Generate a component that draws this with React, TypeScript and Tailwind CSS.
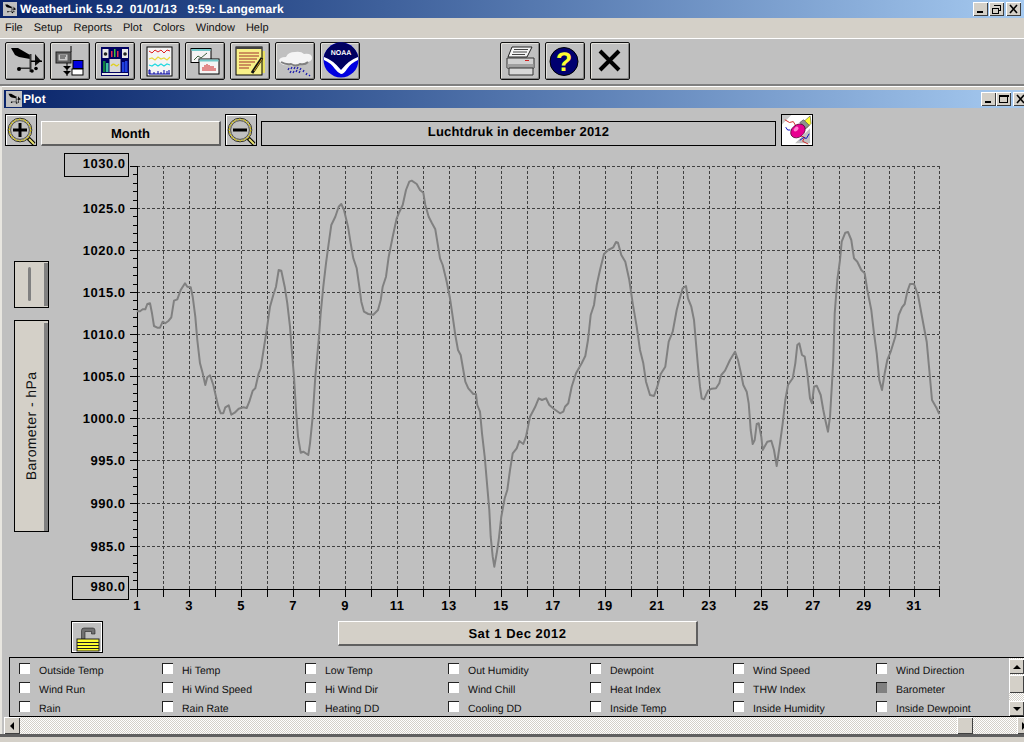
import React from "react";

const trace = (ox: number, oy: number, a: number[]) => {
  const out: string[] = [];
  for (let i = 0; i < a.length; i += 2) out.push(`${(ox + a[i] / 3).toFixed(1)},${(oy + a[i + 1] / 3).toFixed(1)}`);
  return out.join(" ");
};
const curve = [
  trace(130, 170, [20,424,30,424,38,418,46,418,52,402,60,400,66,430,72,468,82,473,90,473,98,455,106,460,116,452,124,442,132,392,142,388,152,360,165,340,172,350,182,352,188,380,196,440,202,510,210,580,218,610,226,645,232,622,240,616,250,645,258,680,265,710,272,730,280,730,286,712,296,706,304,734,314,728,326,716,340,712,350,714,358,695,368,662,376,655,386,610,392,595,400,545,410,480,420,410,430,375,438,350,446,300,454,302,464,350,472,400,480,470,486,550,492,620,498,720,504,800,512,848,520,845,535,855,540,820,548,740,556,620,566,510,572,430,580,350,588,280,596,220,604,165,616,140,626,110,634,102,642,120,654,170,662,220,670,265,680,295,688,350,694,395,702,425,715,432,730,434,744,420,752,390,758,350,768,320,776,260,788,200,800,145,806,130]),
  trace(400, 170, [8,105,18,60,28,35,35,32,50,42,60,60,70,68,76,105,86,140,96,160,106,178,112,215,120,265,128,285,140,335,150,385,158,440,166,495,174,540,182,555,190,600,196,635,205,655,220,672,228,672,232,705,240,725,246,790,254,860,260,930,268,1020,272,1100,278,1160,283,1190,290,1150,296,1110,304,1040,314,985,322,960,330,900,338,850,350,835,358,813,370,822,378,800,390,740,405,712,416,685,426,690,438,685,448,705,462,717,480,730,490,725,495,710,505,700,515,650,528,610,545,580,556,558,564,510,572,435,582,405,590,345,600,300,612,252,625,240,640,232,648,216,654,218,664,255,676,275,688,330,698,400,710,470,720,540,730,580,738,635,750,675,762,678,772,650,782,612,796,590,806,515,818,485,830,420]),
  trace(670, 220, [20,270,28,240,38,205,48,198,54,235,64,260,72,300,78,370,84,440,90,500,95,535,102,538,114,512,125,506,138,505,148,490,154,465,165,452,180,420,195,395,204,420,214,465,220,495,230,515,236,550,242,630,248,672,254,660,260,612,266,610,274,650,278,690,292,665,304,662,312,690,320,738,330,670,338,610,346,540,354,495,368,475,376,430,382,375,388,370,396,405,404,410,412,460,420,535,426,550,432,500,440,497,452,525,460,570,466,600,474,635,480,590,486,490,490,420,494,280,502,180,510,120,515,65,526,38,534,36,544,60,552,115,562,125,574,150,584,160,592,210,604,270,612,340,620,400,628,480,636,510,644,460,652,420,662,395,676,350,686,285,696,262,704,252,712,215,720,192,732,192,744,225,756,290,770,365,778,450,786,540,800,565,808,582]),
].join(" ");

const xs = Array.from({ length: 32 }, (_, i) => (i <= 27 ? 137 + 26 * i : 839 + 25 * (i - 27)));
const ys = [166, 208, 250, 292, 334, 376, 418, 460, 503, 546, 589];
const yVals = ["1030.0", "1025.0", "1020.0", "1015.0", "1010.0", "1005.0", "1000.0", "995.0", "990.0", "985.0", "980.0"];

function Vane() {
  return (
    <g fill="#000">
      <polygon points="6,6 13,6 25,13 25,17 14,15 10,13" />
      <rect x="24.5" y="12" width="2" height="18" fill="#333" />
      <polygon points="30,12 36,19 30,24" fill="#111" />
      <rect x="26" y="18.5" width="11" height="1.5" />
      <rect x="14" y="25.5" width="12" height="1.5" fill="#333" />
      <circle cx="14" cy="27" r="2" />
      <circle cx="27" cy="29" r="1.8" />
      <circle cx="31" cy="26.5" r="1.8" />
    </g>
  );
}

function TBtn({ children }: { children: React.ReactNode }) {
  return (
    <div className="relative w-[40px] h-[38px] shrink-0 rounded-[2px] border border-[#111] bg-[#c0c0c0] shadow-[inset_1px_1px_0_#e4e2dc,inset_-1px_-1px_0_#808080]">
      <svg viewBox="0 0 40 38" width="40" height="38" className="absolute -left-px -top-px">
        {children}
      </svg>
    </div>
  );
}

function Magnifier({ minus }: { minus?: boolean }) {
  return (
    <div className="absolute top-[114px] w-[32px] h-[32px] border border-black bg-[#c0c0c0] shadow-[inset_1px_1px_0_#fff]" style={{ left: minus ? 225 : 5 }}>
      <svg viewBox="0 0 32 32" width="32" height="32" className="absolute -left-px -top-px">
        <line x1="23" y1="24" x2="29" y2="30" stroke="#000" strokeWidth="4" />
        <line x1="24" y1="25" x2="29" y2="30" stroke="#e8e070" strokeWidth="2" />
        <circle cx="15" cy="16" r="11.8" fill="#c0c0c0" stroke="#222" strokeWidth="1" />
        <circle cx="15" cy="16" r="10.6" fill="none" stroke="#c8b820" strokeWidth="1.6" strokeDasharray="2 1" />
        <circle cx="15" cy="16" r="9.4" fill="none" stroke="#333" strokeWidth="0.8" />
        <rect x="8" y="14.5" width="14" height="3" fill="#000" />
        {!minus && <rect x="13.5" y="9" width="3" height="14" fill="#000" />}
      </svg>
    </div>
  );
}

function WinBtn({ left, top, kind }: { left: number; top: number; kind: "min" | "max" | "restore" | "close" }) {
  return (
    <div className="absolute w-[15px] h-[14px] bg-[#d4d0c8] shadow-[inset_1px_1px_0_#fff,inset_-1px_-1px_0_#404040]" style={{ left, top }}>
      <svg viewBox="0 0 15 14" width="15" height="14" shapeRendering="crispEdges">
        {kind === "min" && <rect x="4" y="9" width="6" height="2" fill="#000" />}
        {kind === "max" && <path d="M3.5 3.5h8v7h-8z M3 3h9v1H3z" fill="none" stroke="#000" />}
        {kind === "restore" && (
          <g fill="none" stroke="#000">
            <path d="M5.5 3.5h6v5h-2" />
            <path d="M5 3h7v1H5z" fill="#000" stroke="none" />
            <path d="M3.5 6.5h6v5h-6z" fill="#d4d0c8" />
            <path d="M3 6h7v1H3z" fill="#000" stroke="none" />
          </g>
        )}
        {kind === "close" && <path d="M4 3l7 8M11 3l-7 8" stroke="#000" strokeWidth="1.6" shapeRendering="auto" />}
      </svg>
    </div>
  );
}

const legend = [
  ["Outside Temp", "Hi Temp", "Low Temp", "Out Humidity", "Dewpoint", "Wind Speed", "Wind Direction"],
  ["Wind Run", "Hi Wind Speed", "Hi Wind Dir", "Wind Chill", "Heat Index", "THW Index", "Barometer"],
  ["Rain", "Rain Rate", "Heating DD", "Cooling DD", "Inside Temp", "Inside Humidity", "Inside Dewpoint"],
];
const colX = [19, 162, 305, 448, 590, 733, 876];
const rowY = [663, 682, 701];

export default function App() {
  return (
    <div className="relative w-[1024px] h-[742px] overflow-hidden bg-[#c0c0c0] font-[Liberation_Sans,Arial,sans-serif] [text-rendering:geometricPrecision] text-black">
      {/* main title bar */}
      <div className="absolute left-0 top-0 w-[1024px] h-[18px] bg-gradient-to-r from-[#0a246a] to-[#a6caf0]" />
      <div className="absolute left-[3px] top-[2px] w-[14px] h-[14px] bg-[#c0c0c0]">
        <svg viewBox="0 0 40 38" width="14" height="14"><Vane /></svg>
      </div>
      <div className="absolute left-[20px] top-0 h-[18px] leading-[18px] text-white font-bold text-[12px] tracking-[0.07px] whitespace-pre">WeatherLink 5.9.2  01/01/13   9:59: Langemark</div>
      <WinBtn left={973} top={2} kind="min" />
      <WinBtn left={989} top={2} kind="restore" />
      <WinBtn left={1006} top={2} kind="close" />

      {/* menu */}
      <div className="absolute left-0 top-[18px] w-[1024px] h-[20px] bg-[#d4d0c8] flex items-center gap-[11px] pl-[5px] text-[11px] text-[#111]">
        {["File", "Setup", "Reports", "Plot", "Colors", "Window", "Help"].map((m) => (
          <span key={m}>{m}</span>
        ))}
      </div>
      <div className="absolute left-0 top-[38px] w-[1024px] h-px bg-white" />

      {/* toolbar */}
      <div className="absolute left-[5px] top-[42px] flex gap-[5px]">
        <TBtn><Vane /></TBtn>
        <TBtn>
          <polyline points="21,4 21,10" stroke="#000" fill="none" />
          <rect x="6" y="10" width="15" height="11" fill="#606060" stroke="#222" />
          <rect x="8.5" y="12.5" width="9" height="6" fill="#c8c8c8" />
          <path d="M10 14h6M10 16h5" stroke="#333" />
          <rect x="16.5" y="21" width="1" height="13" fill="#000" />
          <polygon points="13,24 21,24 17,28" fill="#000" />
          <polygon points="13,29 21,29 17,33" fill="#000" />
          <rect x="23" y="18.5" width="10" height="8" fill="#0000e0" stroke="#000" />
          <rect x="22" y="27" width="11" height="6" fill="#fff" stroke="#000" />
        </TBtn>
        <TBtn>
          <rect x="6" y="5" width="28" height="29" fill="#000060" />
          <rect x="7.5" y="7" width="6" height="9" fill="#e8e8e8" />
          <circle cx="10.5" cy="12" r="1.8" fill="#222" />
          <rect x="27" y="7" width="6" height="9" fill="#e8e8e8" />
          <circle cx="30" cy="12" r="1.8" fill="#222" />
          <rect x="16" y="9" width="1.5" height="6" fill="#e03050" />
          <rect x="19" y="7" width="1.5" height="8" fill="#40c040" />
          <rect x="22" y="9" width="1.5" height="6" fill="#e03050" />
          <rect x="8" y="19" width="2.5" height="11" fill="#108040" />
          <rect x="11" y="21" width="2.5" height="9" fill="#40c0a0" />
          <rect x="27" y="20" width="2.5" height="10" fill="#2040e0" />
          <rect x="30" y="19" width="2.5" height="11" fill="#2040e0" />
          <rect x="14.5" y="17" width="11" height="13" fill="#d8d8d8" />
          <path d="M16 24q2 -3 4 -1t4 -1" stroke="#e0d020" strokeWidth="1.3" fill="none" />
          <rect x="7" y="31" width="26" height="2" fill="#e8e8e8" />
        </TBtn>
        <TBtn>
          <rect x="7" y="5" width="25" height="29" fill="#f4f4f4" stroke="#000" />
          <polyline points="9,9 12,11 15,8 18,10 21,8 24,11 27,8 30,9" stroke="#e02020" fill="none" />
          <polyline points="9,17 12,16 15,18 18,15 21,17 24,16 27,18 30,15" stroke="#e8d840" strokeWidth="1.2" fill="none" />
          <polyline points="9,23 12,24 15,22 18,24 21,22 24,24 27,22 30,23" stroke="#20d8e0" strokeWidth="1.2" fill="none" />
          <path d="M9 32v-4h1v4M9 32h21M14 32v-2M18 32v-3M21 32v-2M24 32v-4M27 32v-3M29 32v-4" stroke="#0000a0" fill="none" />
        </TBtn>
        <TBtn>
          <rect x="6" y="6.5" width="20" height="14" fill="#f4f4f4" stroke="#000" />
          <rect x="6.5" y="7" width="19" height="2" fill="#70c8c8" />
          <polyline points="9,18 13,14 16,16 22,11" stroke="#406040" fill="none" />
          <rect x="14" y="17" width="20" height="15" fill="#f4f4f4" stroke="#000" />
          <rect x="14.5" y="17.5" width="19" height="2" fill="#70c8c8" />
          <path d="M18 29v-4M20 29v-6M22 29v-7M24 29v-6M26 29v-5M28 29v-5M30 29v-3" stroke="#d02020" fill="none" />
        </TBtn>
        <TBtn>
          <rect x="32" y="9" width="3" height="22" fill="#e8e060" />
          <rect x="6" y="5" width="26" height="28" fill="#f8f088" stroke="#000" />
          <rect x="6" y="5" width="26" height="2" fill="#404040" />
          <path d="M9 11h20M9 14h20M9 17h18M9 20h16M9 23h12M9 26h10" stroke="#a03030" fill="none" />
          <line x1="32" y1="16" x2="22" y2="31" stroke="#111" strokeWidth="3" />
          <line x1="32" y1="17" x2="24" y2="29" stroke="#d0a020" strokeWidth="1" />
        </TBtn>
        <TBtn>
          <path d="M4 19q0 -4 7 -4q2 -5 9 -5q6 -1 9 2q8 -1 8 4q0 4 -6 4q-3 4 -9 2q-4 3 -8 1q-8 1 -10 -4z" fill="#f4f4f4" />
          <path d="M6 20q5 3 10 2q5 3 9 0q5 1 8 -2" stroke="#808080" strokeWidth="2" fill="none" />
          <path d="M14 26l-1 2M17 25l-1 2M20 25l-1 2M23 25l-1 2M26 26l-1 2M16 29l-1 2M19 29l-1 2M22 28l-1 2M25 29l-1 2M29 28l-1 2M32 31l-1 2M35 33l-1 1" stroke="#2020b0" strokeWidth="1.3" fill="none" />
        </TBtn>
        <TBtn>
          <circle cx="21" cy="18" r="17.5" fill="#0000e0" />
          <path d="M3.8 15a17.5 17.5 0 0 1 34.4 0q-8 3 -17 13q-9 -10 -17.4 -13z" fill="#000060" />
          <path d="M4 15q9 3 17 13q8 -10 17 -13l0 3q-7 3 -11 9q-3 5 -6 5q-3 -1 -6 -5q-4 -6 -11 -9z" fill="#fff" />
          <text x="21" y="13" textAnchor="middle" fontSize="7" fontWeight="700" fill="#fff" fontFamily="Liberation Sans, sans-serif">NOAA</text>
        </TBtn>
      </div>
      <div className="absolute left-[500px] top-[42px] flex gap-[5px]">
        <TBtn>
          <polygon points="12,5 32,5 27,15 8,15" fill="#f4f4f4" stroke="#222" />
          <path d="M14 7.5h14M13 10h14M12 12.5h13" stroke="#444" fill="none" />
          <path d="M7 16h27v10H7z" fill="#d0d0d0" stroke="#333" />
          <rect x="7.5" y="22" width="26" height="4" fill="#a0a0a0" />
          <rect x="25" y="18" width="4" height="1" fill="#d02020" />
          <path d="M9 26h24v7H9z" fill="#d8d8d8" stroke="#333" />
        </TBtn>
        <TBtn>
          <circle cx="19" cy="19.5" r="14" fill="#000070" stroke="#000" />
          <text x="19" y="29" textAnchor="middle" fontSize="27" fontWeight="700" fill="#ffff30" fontFamily="Liberation Sans, sans-serif">?</text>
        </TBtn>
        <TBtn>
          <path d="M10 9l19 19M29 9L10 28" stroke="#000" strokeWidth="4" />
        </TBtn>
      </div>
      <div className="absolute left-0 top-[84px] w-[1024px] h-[2px] bg-[#808080]" />
      <div className="absolute left-0 top-[86px] w-[1024px] h-[4px] bg-[#d4d0c8] border-t border-white" />
      <div className="absolute left-0 top-[86px] w-[2px] h-[650px] bg-[#e8e6e0]" />

      {/* plot window title */}
      <div className="absolute left-[4px] top-[90px] w-[1020px] h-[18px] bg-gradient-to-r from-[#0a246a] to-[#a6caf0]" />
      <div className="absolute left-[6px] top-[91px] w-[16px] h-[16px] bg-[#c0c0c0]">
        <svg viewBox="0 0 40 38" width="16" height="16"><Vane /></svg>
      </div>
      <div className="absolute left-[23px] top-[90px] h-[18px] leading-[18px] text-white font-bold text-[12px]">Plot</div>
      <WinBtn left={981} top={92} kind="min" />
      <WinBtn left={996} top={92} kind="max" />
      <WinBtn left={1013} top={92} kind="close" />

      {/* plot controls */}
      <Magnifier />
      <div className="absolute left-[41px] top-[121px] w-[180px] h-[25px] bg-[#d4d0c8] border-t border-l border-t-white border-l-white border-r-2 border-b-2 border-r-[#606060] border-b-[#606060] flex items-center justify-center pt-[1px] font-bold text-[13px]">Month</div>
      <Magnifier minus />
      <div className="absolute left-[261px] top-[121px] w-[515px] h-[25px] border border-black flex items-center justify-center pb-[3px] font-bold text-[13px] tracking-[0.2px]">Luchtdruk in december 2012</div>
      <div className="absolute left-[781px] top-[114px] w-[32px] h-[32px] border border-black bg-white">
        <svg viewBox="0 0 32 32" width="30" height="30">
          <polygon points="0,0 10,0 0,10" fill="#c8c8c8" />
          <polygon points="30,30 14,30 30,14" fill="#c0c0c0" />
          <polyline points="3,5 8,8 12,7 15,12" stroke="#d02020" fill="none" />
          <polyline points="20,22 24,24 22,28 28,31" stroke="#d02020" fill="none" />
          <polyline points="4,13 6,16 9,16" stroke="#0000c0" fill="none" />
          <polyline points="19,27 23,24 26,25 29,20" stroke="#0000c0" fill="none" />
          <polygon points="22,8 30,1 31,9 26,14" fill="#ffff30" stroke="#222" strokeWidth=".5" />
          <polygon points="19,8 23,5 29,11 25,15" fill="#909090" stroke="#222" strokeWidth=".5" />
          <ellipse cx="17" cy="17" rx="8.500" ry="6.500" transform="rotate(-40 17 17)" fill="#e80090" stroke="#500030" strokeWidth=".8" />
          <ellipse cx="15" cy="15" rx="3" ry="2" transform="rotate(-40 15 15)" fill="#ff80d0" />
        </svg>
      </div>

      {/* left axis controls */}
      <div className="absolute left-[14px] top-[261px] w-[35px] h-[47px] border border-black bg-[#d4d0c8] flex">
        <div className="flex-1 flex items-center justify-center pb-[1px]"><div className="w-[3px] h-[34px] bg-[#808080] rounded-full" /></div>
        <div className="w-[4px] my-[1px] bg-[#808080]" />
      </div>
      <div className="absolute left-[14px] top-[320px] w-[35px] h-[212px] border border-black bg-[#d4d0c8] flex">
        <div className="flex-1 flex items-center justify-center relative">
          <span className="absolute left-[16px] top-[105px] -translate-x-1/2 -translate-y-1/2 -rotate-90 whitespace-nowrap text-[14px] tracking-[0.4px] text-[#111]">Barometer - hPa</span>
        </div>
        <div className="w-[4px] mt-[2px] bg-[#808080]" />
      </div>

      {/* y-axis limit boxes */}
      <div className="absolute left-[64px] top-[153px] w-[65px] h-[24px] border border-black" />
      <div className="absolute left-[72px] top-[576px] w-[57px] h-[24px] border border-black" />

      {/* chart */}
      <svg viewBox="125 160 820 445" width="820" height="445" className="absolute left-[125px] top-[160px]">
        <g shapeRendering="crispEdges">
          {ys.slice(0, 10).map((y) => (
            <line key={y} x1="137" x2="939" y1={y + 0.5} y2={y + 0.5} stroke="#404040" strokeDasharray="3 2" />
          ))}
          {xs.slice(1).map((x) => (
            <line key={x} x1={x + 0.5} x2={x + 0.5} y1="166" y2="589" stroke="#404040" strokeDasharray="3 2" />
          ))}
          <line x1="137.5" x2="137.5" y1="166" y2="596" stroke="#000" strokeWidth="1.5" />
          <line x1="130" x2="940" y1="589.5" y2="589.5" stroke="#000" />
          {ys.map((y) => (
            <line key={y} x1="130" x2="137" y1={y + 0.5} y2={y + 0.5} stroke="#000" />
          ))}
          {ys.slice(0, 10).flatMap((y, i) =>
            [1, 2, 3, 4].map((k) => {
              const t = Math.round(y + ((ys[i + 1] - y) * k) / 5) + 0.5;
              return <line key={`${i}-${k}`} x1="133" x2="137" y1={t} y2={t} stroke="#000" />;
            })
          )}
          {xs.map((x) => (
            <line key={x} x1={x + 0.5} x2={x + 0.5} y1="589" y2="597" stroke="#000" />
          ))}
        </g>
        <polyline points={curve} fill="none" stroke="#808080" strokeWidth="2" strokeLinejoin="round" />
      </svg>

      {/* axis labels */}
      {yVals.map((v, i) => (
        <div
          key={v}
          className="absolute w-[60px] left-[65.5px] text-right font-bold text-[13px] leading-[14px] tracking-[0.5px]"
          style={{ top: (i === 0 ? 163 : i === 10 ? 586 : ys[i]) - 6 }}
        >
          {v}
        </div>
      ))}
      {xs.map((x, i) =>
        i % 2 === 0 && i < 31 ? (
          <div key={x} className="absolute w-[30px] text-center font-bold text-[13px] leading-[14px] tracking-[0.5px] top-[599px]" style={{ left: x - 15 }}>
            {i + 1}
          </div>
        ) : null
      )}

      {/* lock */}
      <div className="absolute left-[71px] top-[621px] w-[32px] h-[32px] border border-black bg-[#c0c0c0] shadow-[inset_1px_1px_0_#fff,inset_-1px_-1px_0_#fff]">
        <svg viewBox="0 0 32 32" width="32" height="32" className="absolute -left-px -top-px">
          <path d="M10.5 18V9.5Q10.5 7 13 7h9q2 0 2 2.5V13h-3.5V10.5h-6.5V18z" fill="#707070" stroke="#222" strokeWidth=".6" />
          <rect x="6" y="18" width="22" height="12" fill="#ffff30" stroke="#222" />
          <path d="M6 21.5h22M6 24.5h22M6 27.5h22" stroke="#222" />
        </svg>
      </div>

      {/* date */}
      <div className="absolute left-[338px] top-[621px] w-[360px] h-[25px] bg-[#d4d0c8] border-t border-l border-t-white border-l-white border-r-2 border-b-2 border-r-[#606060] border-b-[#606060] flex items-center justify-center pt-[1px] font-bold text-[13px] tracking-[0.5px]">Sat 1 Dec 2012</div>

      {/* legend */}
      <div className="absolute left-[9px] top-[657px] w-[1015px] h-[60px] border border-black border-r-0" />
      {legend.map((row, r) =>
        row.map((label, c) => (
          <React.Fragment key={label}>
            <div
              className={`absolute w-[11px] h-[11px] border-t border-l border-[#222] ${label === "Barometer" ? "bg-[#808080]" : "bg-white"}`}
              style={{ left: colX[c], top: rowY[r] }}
            />
            <div className="absolute text-[10.5px] leading-[14px] text-[#111] whitespace-nowrap" style={{ left: colX[c] + 20, top: rowY[r] + 1 }}>
              {label}
            </div>
          </React.Fragment>
        ))
      )}

      {/* vertical scrollbar */}
      <div className="absolute left-[1009px] top-[658px] w-[15px] h-[58px] bg-[repeating-conic-gradient(#d4d0c8_0_25%,#ffffff_0_50%)] bg-[length:2px_2px]" />
      <div className="absolute left-[1009px] top-[659px] w-[15px] h-[15px] bg-[#d4d0c8] shadow-[inset_1px_1px_0_#fff,inset_-1px_-1px_0_#404040] flex items-center justify-center">
        <div className="w-0 h-0 border-x-[4px] border-x-transparent border-b-[4px] border-b-black" />
      </div>
      <div className="absolute left-[1009px] top-[675px] w-[15px] h-[18px] bg-[#d4d0c8] shadow-[inset_1px_1px_0_#fff,inset_-1px_-1px_0_#404040]" />
      <div className="absolute left-[1009px] top-[701px] w-[15px] h-[15px] bg-[#d4d0c8] shadow-[inset_1px_1px_0_#fff,inset_-1px_-1px_0_#404040] flex items-center justify-center">
        <div className="w-0 h-0 border-x-[4px] border-x-transparent border-t-[4px] border-t-black" />
      </div>

      {/* horizontal scrollbar */}
      <div className="absolute left-[4px] top-[717px] w-[1020px] h-[17px] bg-[repeating-conic-gradient(#d4d0c8_0_25%,#ffffff_0_50%)] bg-[length:2px_2px]" />
      <div className="absolute left-[4px] top-[717px] w-[16px] h-[17px] bg-[#d4d0c8] shadow-[inset_1px_1px_0_#fff,inset_-1px_-1px_0_#404040] flex items-center justify-center">
        <div className="w-0 h-0 border-y-[4px] border-y-transparent border-r-[4px] border-r-black" />
      </div>
      <div className="absolute left-[957px] top-[717px] w-[16px] h-[17px] bg-[#d4d0c8] shadow-[inset_1px_1px_0_#fff,inset_-1px_-1px_0_#404040]" />
      <div className="absolute left-[1017px] top-[717px] w-[16px] h-[17px] bg-[#d4d0c8] shadow-[inset_1px_1px_0_#fff,inset_-1px_-1px_0_#404040] flex items-center pl-[5px]">
        <div className="w-0 h-0 border-y-[4px] border-y-transparent border-l-[4px] border-l-black" />
      </div>
      <div className="absolute left-0 top-[734px] w-[1024px] h-[3px] bg-[#606060]" />
      <div className="absolute left-0 top-[737px] w-[1024px] h-[5px] bg-[#d4d0c8]" />
    </div>
  );
}
